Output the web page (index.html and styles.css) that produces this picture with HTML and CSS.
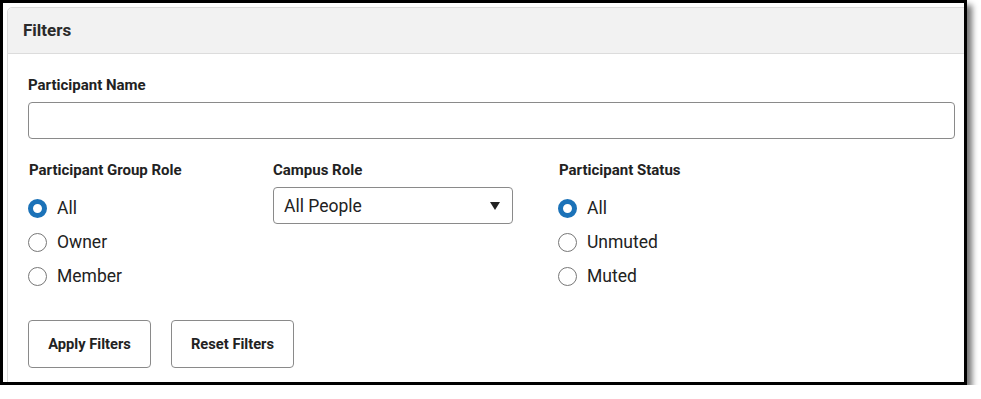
FILE: index.html
```html
<!DOCTYPE html>
<html>
<head>
<meta charset="utf-8">
<link rel="stylesheet" href="styles.css">
</head>
<body>
<div class="frame">
  <div class="panel">
    <div class="panel-header">Filters</div>
    <div class="panel-body">
      <div class="field">
        <label class="label">Participant Name</label>
        <input class="text-input" type="text">
      </div>
      <div class="columns">
        <div class="col col-group">
          <div class="label">Participant Group Role</div>
          <div class="radios">
            <div class="radio-row"><span class="radio checked"></span><span>All</span></div>
            <div class="radio-row"><span class="radio"></span><span>Owner</span></div>
            <div class="radio-row"><span class="radio"></span><span>Member</span></div>
          </div>
        </div>
        <div class="col col-campus">
          <div class="label">Campus Role</div>
          <div class="select"><span>All People</span><span class="caret"></span></div>
        </div>
        <div class="col col-status">
          <div class="label">Participant Status</div>
          <div class="radios">
            <div class="radio-row"><span class="radio checked"></span><span>All</span></div>
            <div class="radio-row"><span class="radio"></span><span>Unmuted</span></div>
            <div class="radio-row"><span class="radio"></span><span>Muted</span></div>
          </div>
        </div>
      </div>
      <div class="buttons">
        <button class="btn">Apply Filters</button>
        <button class="btn">Reset Filters</button>
      </div>
    </div>
  </div>
</div>
</body>
</html>
```
FILE: styles.css
```css
* { box-sizing: border-box; }
html, body { margin: 0; padding: 0; background: #fff; }
body { font-family: Roboto, "Liberation Sans", sans-serif; color: #222; }

.frame {
  width: 967px;
  height: 385px;
  border: 3px solid #000;
  overflow: hidden;
  box-shadow: 5px 5px 6px rgba(0,0,0,0.55);
  background: #fff;
  padding: 4px 0 0 4px;
}

.panel {
  width: 969px;
  height: 420px;
  border: 1px solid #dcdcdc;
  border-radius: 5px;
  background: #fff;
}

.panel-header {
  height: 46px;
  background: #f2f2f2;
  border-bottom: 1px solid #dcdcdc;
  border-radius: 5px 5px 0 0;
  padding: 0 0 0 15px;
  font-size: 17px;
  font-weight: 700;
  line-height: 45px;
  color: #2b2b2b;
}

.panel-body { padding: 21px 20px 0 20px; }

.label {
  display: block;
  font-size: 15px;
  font-weight: 700;
  line-height: 21px;
  color: #222;
}

.text-input {
  display: block;
  width: 100%;
  height: 37px;
  margin-top: 6px;
  border: 1px solid #8a8a8a;
  border-radius: 4px;
  background: #fff;
}

.columns { display: flex; margin-top: 21px; }
.col-group { width: 245px; padding-left: 1px; }
.col-campus { width: 286px; }
.col-status { width: 300px; }

.radios { margin-top: 10px; }
.radio-row {
  display: flex;
  align-items: center;
  height: 34px;
  font-size: 17.5px;
  color: #222;
}
.radio {
  width: 19px;
  height: 19px;
  border: 1px solid #777;
  border-radius: 50%;
  margin-right: 10px;
  margin-left: -1px;
  background: #fff;
  flex: none;
}
.radio.checked {
  border: 5px solid #1b72b8;
}

.select {
  margin-top: 6px;
  width: 240px;
  height: 37px;
  border: 1px solid #8a8a8a;
  border-radius: 4px;
  display: flex;
  align-items: center;
  justify-content: space-between;
  padding: 0 12px 0 10px;
  font-size: 17.5px;
  color: #222;
}
.caret {
  width: 0; height: 0;
  border-left: 5px solid transparent;
  border-right: 5px solid transparent;
  border-top: 8px solid #222;
}

.buttons { display: flex; gap: 20px; margin-top: 27px; }
.btn {
  height: 48px;
  width: 123px;
  border: 1px solid #8a8a8a;
  border-radius: 4px;
  background: #fff;
  font-family: Roboto, "Liberation Sans", sans-serif;
  font-size: 14.7px;
  font-weight: 700;
  color: #222;
}
```
